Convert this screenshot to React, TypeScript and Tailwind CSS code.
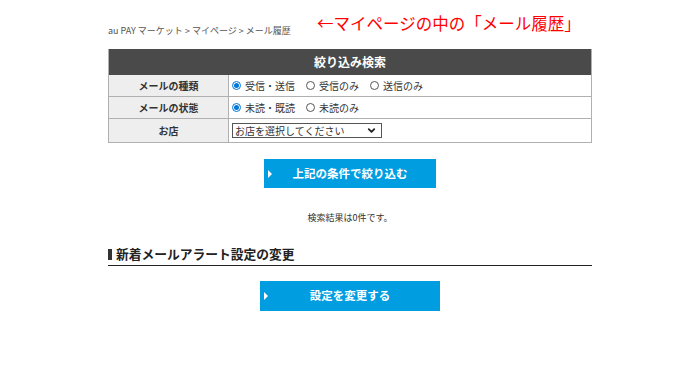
import { ChevronDown } from "lucide-react";

const jp = { fontFamily: '"Noto Sans CJK JP", "Noto Sans", sans-serif' };

function Radio({ checked, label }: { checked?: boolean; label: string }) {
  return (
    <label className="flex items-center gap-[4px]">
      {checked ? (
        <span className="w-[9px] h-[9px] rounded-full border border-[#0078d7] bg-white flex items-center justify-center">
          <span className="w-[5px] h-[5px] rounded-full bg-[#0078d7]" />
        </span>
      ) : (
        <span className="w-[9px] h-[9px] rounded-full border border-[#555] bg-white" />
      )}
      <span className="text-[10px] leading-[12px] text-[#333]">{label}</span>
    </label>
  );
}

function Row({ label, children, h }: { label: string; children: React.ReactNode; h: string }) {
  return (
    <div className={`flex border-b border-[#b0b0b0] ${h}`}>
      <div className="w-[120px] shrink-0 bg-[#eeeeee] border-r border-[#b0b0b0] flex items-center justify-center text-[10px] font-bold text-[#333]">
        {label}
      </div>
      <div className="flex-1 flex items-center pl-[3px] gap-[11px]">{children}</div>
    </div>
  );
}

function BlueButton({ label, w }: { label: string; w: string }) {
  return (
    <button className={`relative mx-auto flex items-center justify-center bg-[#009de0] text-white font-bold text-[11.5px] ${w}`}>
      <span className="absolute left-[4px] top-1/2 -translate-y-1/2 w-0 h-0 border-y-[4px] border-y-transparent border-l-[4px] border-l-white" />
      {label}
    </button>
  );
}

export default function App() {
  return (
    <div className="relative w-[700px] h-[384px] bg-white" style={jp}>
      {/* annotation */}
      <div className="absolute left-[317px] top-[13px] text-[16.5px] leading-[20px] text-[#ff0000]">
        ←マイページの中の「メール履歴」
      </div>

      <div className="w-[484px] mx-auto pt-[25px] flex flex-col">
        <div className="text-[9px] leading-[12px] text-[#555]">au PAY マーケット &gt; マイページ &gt; メール履歴</div>

        {/* search table */}
        <div className="mt-[12px] border-x border-[#b0b0b0]">
          <div className="h-[26px] bg-[#4a4a4a] flex items-center justify-center text-white font-bold text-[12px]">
            絞り込み検索
          </div>
          <Row label="メールの種類" h="h-[22px]">
            <Radio checked label="受信・送信" />
            <Radio label="受信のみ" />
            <Radio label="送信のみ" />
          </Row>
          <Row label="メールの状態" h="h-[22px]">
            <Radio checked label="未読・既読" />
            <Radio label="未読のみ" />
          </Row>
          <Row label="お店" h="h-[24px]">
            <div className="w-[150px] h-[15px] border border-[#555] flex items-center justify-between pl-[2px] pr-[4px] text-[10px] text-[#333]">
              <span>お店を選択してください</span>
              <ChevronDown size={11} strokeWidth={4} className="text-[#222]" />
            </div>
          </Row>
        </div>

        <div className="mt-[16px]">
          <BlueButton label="上記の条件で絞り込む" w="w-[172px] h-[29px]" />
        </div>

        <p className="mt-[24px] text-center text-[9px] leading-[12px] text-[#333]">検索結果は0件です。</p>

        <h2 className="mt-[22px] pb-[3px] border-b border-[#222] flex items-center gap-[4px] text-[12.75px] leading-[16px] font-bold text-[#222]">
          <span className="w-[4px] h-[11px] bg-[#333]" />
          新着メールアラート設定の変更
        </h2>

        <div className="mt-[15px]">
          <BlueButton label="設定を変更する" w="w-[180px] h-[30px]" />
        </div>
      </div>
    </div>
  );
}
